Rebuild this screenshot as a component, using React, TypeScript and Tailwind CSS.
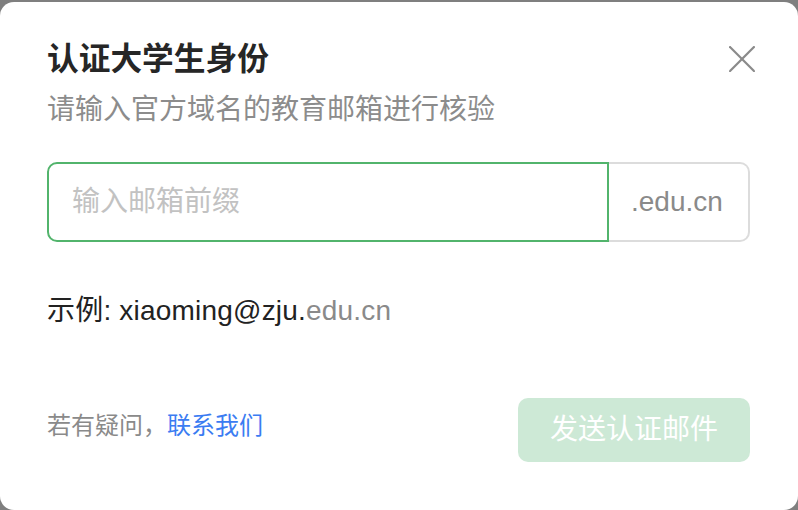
import { useState } from "react";

const FONT = "font-['Liberation_Sans','Noto_Sans_CJK_SC',sans-serif]";

function CloseIcon() {
  return (
    <svg width="26" height="26" viewBox="0 0 26 26" fill="none" stroke="#8a8a8a" strokeWidth="2.2" strokeLinecap="square">
      <path d="M1 1 L25 25" />
      <path d="M25 1 L1 25" />
    </svg>
  );
}

export default function App() {
  const [prefix, setPrefix] = useState("");

  return (
    <div className={`h-screen w-full bg-[#7f7f7f] pt-[2px] ${FONT}`}>
      <div className="flex h-[508px] w-full flex-col rounded-[14px] bg-white pl-[47px] pr-[48px] pt-[37px]">
        {/* header */}
        <div className="flex items-start justify-between">
          <div>
            <h2 className="text-[31.7px] font-semibold leading-[40px] text-[#262626]">认证大学生身份</h2>
            <p className="mt-[11px] text-[28px] leading-[40px] text-[#8c8c8c]">请输入官方域名的教育邮箱进行核验</p>
          </div>
          <button className="-mr-[5px] mt-[7px] cursor-pointer" aria-label="关闭">
            <CloseIcon />
          </button>
        </div>

        {/* email input */}
        <div className="mt-[32px] flex h-[80px]">
          <div className="flex flex-1 items-center rounded-l-[10px] border-2 border-[#52b46c] pl-[23px] pr-3">
            <input
              value={prefix}
              onChange={(e) => setPrefix(e.target.value)}
              placeholder="输入邮箱前缀"
              className="w-full bg-transparent text-[28px] text-[#222] outline-none placeholder:text-[#c2c2c2]"
            />
          </div>
          <div className="flex w-[141px] items-center rounded-r-[10px] border-2 border-l-0 border-[#dcdcdc] pl-[22px] text-[28px] text-[#8a8a8a]">
            .edu.cn
          </div>
        </div>

        <div className="mt-[49px] text-[28px] leading-[40px] tracking-[0.2px] text-[#222]">
          示例: xiaoming@zju.<span className="text-[#8a8a8a]">edu.cn</span>
        </div>

        {/* footer */}
        <div className="mt-[67px] flex items-start justify-between">
          <div className="mt-[12px] text-[24px] leading-[32px] text-[#8a8a8a]">
            若有疑问，<a className="cursor-pointer text-[#3b7cf2]">联系我们</a>
          </div>
          <button
            disabled
            className="h-[64px] w-[232px] rounded-[10px] bg-[#cde9d6] text-[28px] text-white"
          >
            发送认证邮件
          </button>
        </div>
      </div>
    </div>
  );
}
